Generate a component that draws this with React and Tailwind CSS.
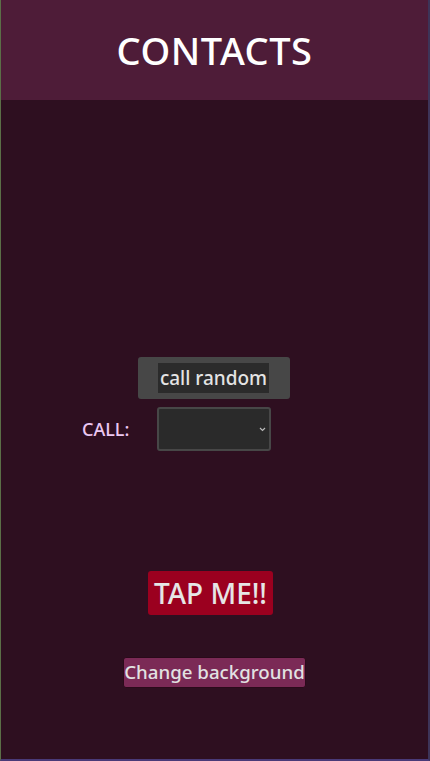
export default function App() {
  return (
    <div className="flex h-[761px] w-[430px] flex-col overflow-hidden border-b-2 border-l border-r-2 border-b-[#4a3a78] border-l-[#5b6e47] border-r-[#3d3458] bg-[#2e0f20] font-['Noto_Sans','Open_Sans',sans-serif]">
      <header className="flex h-[100px] shrink-0 items-center justify-center bg-[#4e1c38]">
        <h1 className="text-[38px] font-medium tracking-[0.5px] text-white">CONTACTS</h1>
      </header>

      <main className="flex flex-1 flex-col items-center">
        <button type="button" className="mt-[257px] ml-[-2px] flex h-[42px] w-[152px] items-center justify-center rounded-[3px] bg-[#474747]">
          <span className="whitespace-nowrap bg-[#2b2b2b] px-[2px] text-[19px] font-medium leading-[30px] text-[#e4e4e4]">call random</span>
        </button>

        <div className="mt-[8px] ml-[-76px] flex items-center">
          <span className="w-[75px] text-[18px] font-medium text-[#ecc8f2]">CALL:</span>
          <div className="relative h-[44px] w-[114px] rounded-[3px] border-2 border-[#474747] bg-[#2a2a2a]">
            <svg className="absolute right-[3px] top-[18px]" width="7" height="5" viewBox="0 0 7 5">
              <path d="M1 1l2.5 2.5L6 1" fill="none" stroke="#bbbbbb" strokeWidth="1.2" />
            </svg>
          </div>
        </div>

        <button type="button" className="mt-[120px] ml-[-8px] h-[44px] w-[125px] whitespace-nowrap rounded-[3px] bg-[#9b001f] text-[28px] font-medium text-[#e6e6e6]">
          TAP ME!!
        </button>

        <button type="button" className="mt-[42px] h-[31px] w-[183px] whitespace-nowrap rounded-[3px] border border-[#2a0a1a] bg-[#7b2a56] text-[18.7px] font-medium leading-none text-[#e2e2e2]">
          Change background
        </button>
      </main>
    </div>
  )
}
